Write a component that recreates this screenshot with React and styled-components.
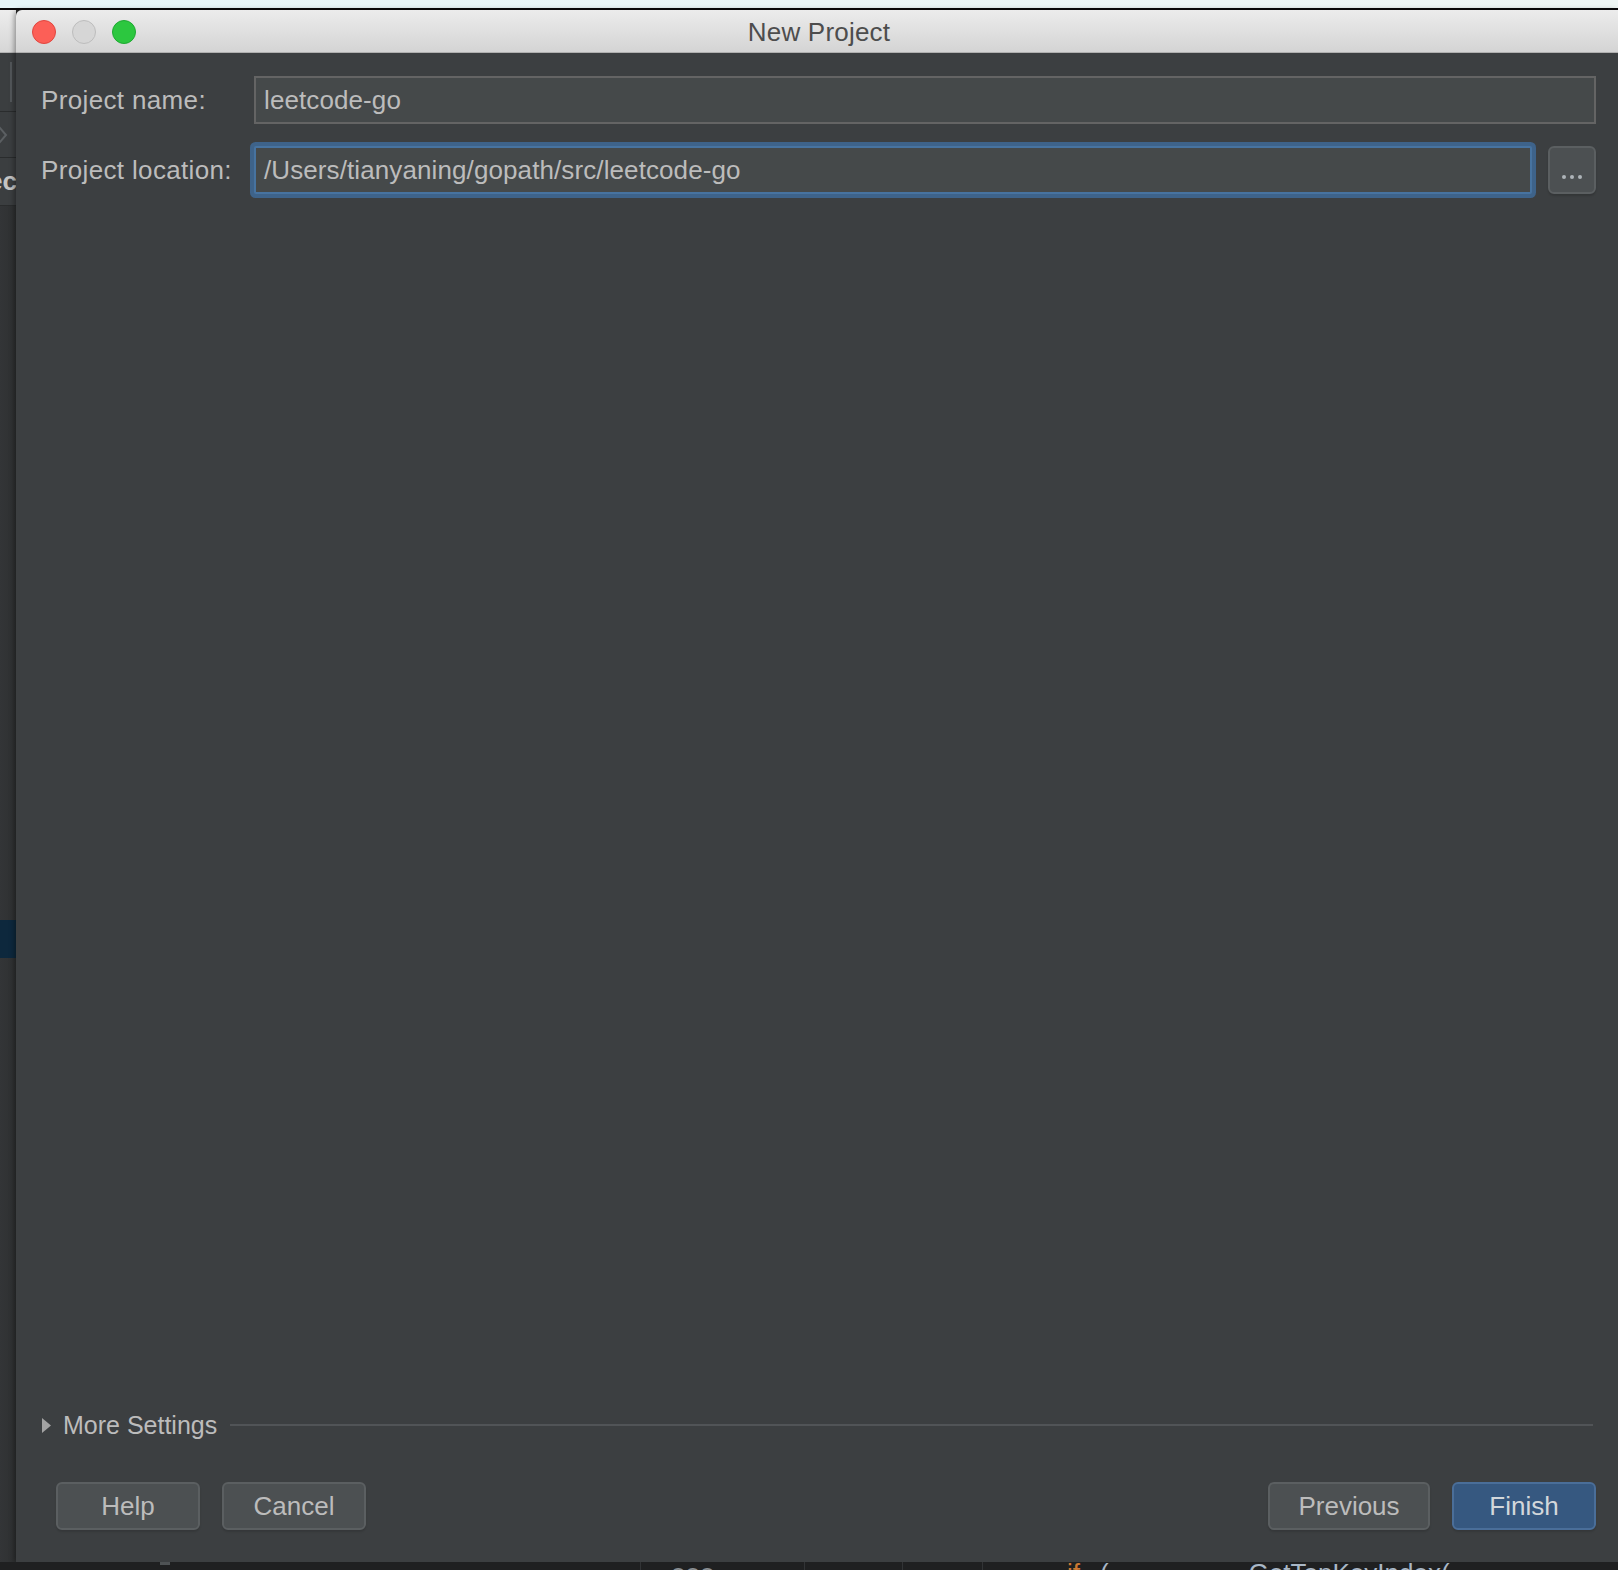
import React from 'react';
import styled, { createGlobalStyle } from 'styled-components';

const Global = createGlobalStyle`
  html, body { margin: 0; padding: 0; background: #2b2b2b; }
  body {
    font-family: "Liberation Sans", Arial, Helvetica, sans-serif;
    width: 1618px; height: 1570px; overflow: hidden;
    -webkit-font-smoothing: antialiased;
  }
  #root { width: 1618px; height: 1570px; }
  * { box-sizing: border-box; }
`;

const Screen = styled.div`
  width: 1618px;
  height: 1570px;
  display: flex;
  flex-direction: column;
  overflow: hidden;
  background: #2b2b2b;
`;

const DesktopStrip = styled.div`
  height: 8px;
  flex-shrink: 0;
  background: linear-gradient(90deg, #e6f6f8, #eef6f4);
`;

const Rule = styled.div`
  height: 2px;
  flex-shrink: 0;
  background: #0b0b0b;
`;

const Middle = styled.div`
  height: 1552px;
  flex-shrink: 0;
  display: flex;
`;

/* ---------- IDE panel peeking out at the left ---------- */
const SidePanel = styled.div`
  width: 16px;
  flex-shrink: 0;
  display: flex;
  flex-direction: column;
  overflow: hidden;
  background: #313335;
`;

const SideTitle = styled.div`
  height: 43px;
  flex-shrink: 0;
  background: linear-gradient(#ededed, #d6d6d6);
  border-bottom: 1px solid #b3b3b3;
`;

const SideCell = styled.div`
  height: ${p => p.$h}px;
  flex-shrink: 0;
  background: #3b3e40;
  border-bottom: 1px solid #2a2c2d;
  display: flex;
  align-items: center;
  justify-content: ${p => (p.$end ? 'flex-end' : 'flex-start')};
  overflow: hidden;
`;

const SideBar = styled.div`
  width: 2px;
  height: 40px;
  margin-left: 10px;
  background: #53575a;
`;

const SideText = styled.span`
  font-size: 26px;
  font-weight: bold;
  color: #c4c4c4;
  white-space: nowrap;
  flex-shrink: 0;
  margin-right: -1px;
`;

const SideFill = styled.div`
  height: ${p => p.$h}px;
  flex-shrink: 0;
  background: ${p => (p.$sel ? '#0d283d' : 'linear-gradient(90deg, #333537, #2e3031)')};
`;

/* ---------- dialog window ---------- */
const Window = styled.div`
  flex: 1;
  display: flex;
  flex-direction: column;
  border-top-left-radius: 6px;
  overflow: hidden;
  background: #3c3f41;
  box-shadow: -2px 0 5px rgba(0, 0, 0, 0.35);
`;

const TitleBar = styled.div`
  height: 43px;
  flex-shrink: 0;
  display: grid;
  grid-template-columns: 1fr auto 1fr;
  align-items: center;
  background: linear-gradient(#ececec, #d4d4d4);
  border-bottom: 1px solid #b0b0b0;
`;

const Lights = styled.div`
  display: flex;
  gap: 16px;
  padding-left: 16px;
  margin-top: 2px;
`;

const Light = styled.span`
  width: 24px;
  height: 24px;
  border-radius: 50%;
  background: ${p => p.$fill};
  border: 1px solid ${p => p.$edge};
`;

const Title = styled.div`
  font-size: 26px;
  line-height: 30px;
  color: #4d4d4d;
  margin-top: 1px;
  margin-left: 4px;
  letter-spacing: 0.2px;
`;

const Body = styled.div`
  flex: 1;
  display: flex;
  flex-direction: column;
  padding: 23px 22px 32px 25px;
`;

const Form = styled.div`
  display: grid;
  grid-template-columns: 209px 1fr;
  row-gap: 22px;
`;

const Label = styled.label`
  align-self: center;
  font-size: 26px;
  line-height: 30px;
  letter-spacing: 0.35px;
  color: #bcbcbc;
  white-space: nowrap;
`;

const FieldRow = styled.div`
  display: flex;
  gap: 16px;
  padding-left: 4px;
`;

const TextField = styled.div`
  flex: 1;
  height: 48px;
  display: flex;
  align-items: center;
  padding: 0 8px;
  background: #45494a;
  border: 2px solid ${p => (p.$focused ? '#4773a0' : '#646464')};
  border-radius: ${p => (p.$focused ? '2px' : '0')};
  box-shadow: ${p => (p.$focused ? '0 0 0 4px #3e638a' : 'none')};
  font-size: 26px;
  line-height: 30px;
  letter-spacing: 0.1px;
  color: #bcbcbc;
  white-space: nowrap;
`;

const BrowseButton = styled.button`
  width: 48px;
  height: 48px;
  flex-shrink: 0;
  padding: 0;
  display: flex;
  align-items: center;
  justify-content: center;
  gap: 4px;
  padding-top: 14px;
  background: #4c5052;
  border: 2px solid #5b5f61;
  border-radius: 6px;
  box-shadow: 0 2px 2px rgba(0, 0, 0, 0.15);
`;

const Dot = styled.span`
  width: 4px;
  height: 4px;
  border-radius: 50%;
  background: #aeb4b9;
`;

const Spacer = styled.div`
  flex: 1;
`;

const MoreRow = styled.div`
  height: 30px;
  display: flex;
  align-items: center;
  padding-left: 1px;
`;

const MoreText = styled.span`
  margin-left: 12px;
  font-size: 25px;
  line-height: 30px;
  color: #bcbcbc;
  white-space: nowrap;
`;

const Separator = styled.div`
  flex: 1;
  height: 2px;
  margin: 0 3px 0 13px;
  background: #515457;
`;

const ButtonBar = styled.div`
  margin-top: 42px;
  height: 48px;
  display: flex;
  gap: 22px;
  padding-left: 15px;
`;

const Push = styled.div`
  margin-left: auto;
`;

const Button = styled.button`
  width: ${p => p.$w}px;
  height: 48px;
  padding: 0;
  font-family: inherit;
  font-size: 26px;
  line-height: 30px;
  color: ${p => (p.$primary ? '#d3d7db' : '#bcbcbc')};
  background: ${p => (p.$primary ? '#365880' : '#4c5052')};
  border: 2px solid ${p => (p.$primary ? '#4a6e99' : '#5b5f61')};
  border-radius: 6px;
  box-shadow: 0 2px 2px rgba(0, 0, 0, 0.12);
`;

/* ---------- IDE editor peeking out at the bottom ---------- */
const BottomStrip = styled.div`
  height: 8px;
  flex-shrink: 0;
  display: flex;
  overflow: hidden;
  background: #1f2021;
`;

const StripCell = styled.div`
  width: ${p => (p.$w ? `${p.$w}px` : 'auto')};
  flex: ${p => (p.$w ? '0 0 auto' : '1')};
  height: 8px;
  display: flex;
  padding-left: ${p => p.$pad || 0}px;
  border-right: ${p => (p.$line ? '1px solid #323436' : 'none')};
  overflow: hidden;
`;

const StripTab = styled.div`
  width: 10px;
  height: 3px;
  flex-shrink: 0;
  background: #4e5254;
`;

const Code = styled.span`
  margin-top: -4px;
  margin-left: ${p => p.$ml || 0}px;
  font-size: 26px;
  line-height: 30px;
  white-space: nowrap;
  color: ${p => p.$color || '#a9b7c6'};
  flex-shrink: 0;
`;

function Chevron() {
  return (
    <svg width="16" height="30" viewBox="0 0 16 30">
      <polyline points="-6,1 6,15 -6,29" fill="none" stroke="#5b5f62" strokeWidth="2" />
    </svg>
  );
}

function Triangle() {
  return (
    <svg width="9" height="15" viewBox="0 0 9 15">
      <polygon points="0,0 9,7.5 0,15" fill="#a3a3a3" />
    </svg>
  );
}

export default function App() {
  return (
    <Screen>
      <Global />
      <DesktopStrip />
      <Rule />
      <Middle>
        <SidePanel>
          <SideTitle />
          <SideCell $h={59}>
            <SideBar />
          </SideCell>
          <SideCell $h={46}>
            <Chevron />
          </SideCell>
          <SideCell $h={48} $end>
            <SideText>Sec</SideText>
          </SideCell>
          <SideFill $h={714} />
          <SideFill $h={38} $sel />
          <SideFill $h={604} />
        </SidePanel>

        <Window>
          <TitleBar>
            <Lights>
              <Light $fill="#fc5f57" $edge="#e1463f" />
              <Light $fill="#d6d6d6" $edge="#bdbdbd" />
              <Light $fill="#2cc73f" $edge="#1ea932" />
            </Lights>
            <Title>New Project</Title>
            <div />
          </TitleBar>

          <Body>
            <Form>
              <Label>Project name:</Label>
              <FieldRow>
                <TextField>leetcode-go</TextField>
              </FieldRow>
              <Label>Project location:</Label>
              <FieldRow>
                <TextField $focused>/Users/tianyaning/gopath/src/leetcode-go</TextField>
                <BrowseButton aria-label="Browse">
                  <Dot />
                  <Dot />
                  <Dot />
                </BrowseButton>
              </FieldRow>
            </Form>

            <Spacer />

            <MoreRow>
              <Triangle />
              <MoreText>More Settings</MoreText>
              <Separator />
            </MoreRow>

            <ButtonBar>
              <Button $w={144}>Help</Button>
              <Button $w={144}>Cancel</Button>
              <Push />
              <Button $w={162}>Previous</Button>
              <Button $w={144} $primary>Finish</Button>
            </ButtonBar>
          </Body>
        </Window>
      </Middle>

      <BottomStrip>
        <StripCell $w={160} />
        <StripTab />
        <StripCell $w={471} $line />
        <StripCell $w={164} $line $pad={30}>
          <Code $color="#8a8f93">ooo</Code>
        </StripCell>
        <StripCell $w={98} $line />
        <StripCell $w={80} $line />
        <StripCell $pad={84}>
          <Code $color="#cc7832">if</Code>
          <Code $ml={20}>(</Code>
          <Code $ml={140}>GetTopKeyIndex(</Code>
        </StripCell>
      </BottomStrip>
    </Screen>
  );
}
